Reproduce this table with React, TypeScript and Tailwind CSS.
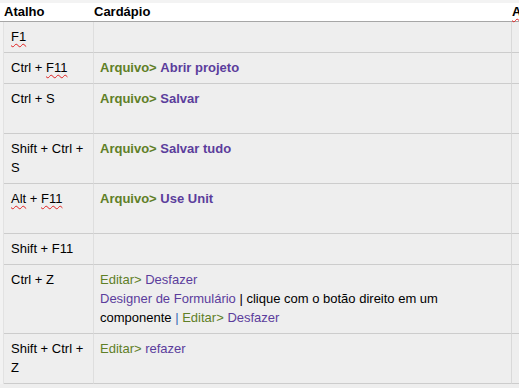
import React from "react";

const G = ({ children, bold = true }: { children: React.ReactNode; bold?: boolean }) => (
  <span className={`text-[#5f7f27] ${bold ? "font-bold" : ""}`}>{children}</span>
);
const P = ({ children, bold = true }: { children: React.ReactNode; bold?: boolean }) => (
  <span className={`text-[#5b3d9c] ${bold ? "font-bold" : ""}`}>{children}</span>
);
const Sq = ({ children }: { children: React.ReactNode }) => (
  <span className="underline decoration-wavy decoration-[#e02020] decoration-1 underline-offset-2">{children}</span>
);

type Row = { h: string; k: React.ReactNode; m: React.ReactNode };

const rows: Row[] = [
  { h: "h-[31px]", k: <Sq>F1</Sq>, m: null },
  {
    h: "h-[31px]",
    k: (
      <>
        Ctrl + <Sq>F11</Sq>
      </>
    ),
    m: (
      <>
        <G>Arquivo&gt;</G> <P>Abrir projeto</P>
      </>
    ),
  },
  {
    h: "h-[50px]",
    k: "Ctrl + S",
    m: (
      <>
        <G>Arquivo&gt;</G> <P>Salvar</P>
      </>
    ),
  },
  {
    h: "h-[50px]",
    k: "Shift + Ctrl + S",
    m: (
      <>
        <G>Arquivo&gt;</G> <P>Salvar tudo</P>
      </>
    ),
  },
  {
    h: "h-[50px]",
    k: (
      <>
        <Sq>Alt</Sq> + <Sq>F11</Sq>
      </>
    ),
    m: (
      <>
        <G>Arquivo&gt;</G> <P>Use Unit</P>
      </>
    ),
  },
  { h: "h-[31px]", k: "Shift + F11", m: null },
  {
    h: "h-[69px]",
    k: "Ctrl + Z",
    m: (
      <>
        <G bold={false}>Editar&gt;</G> <P bold={false}>Desfazer</P>
        <br />
        <P bold={false}>Designer de Formulário</P> | clique com o botão direito em um componente{" "}
        <span className="text-[#3a6db5]">|</span> <G bold={false}>Editar&gt;</G> <P bold={false}>Desfazer</P>
      </>
    ),
  },
  {
    h: "h-[50px]",
    k: "Shift + Ctrl + Z",
    m: (
      <>
        <G bold={false}>Editar&gt;</G> <P bold={false}>refazer</P>
      </>
    ),
  },
];

export default function App() {
  return (
    <div
      className="w-[519px] h-[388px] overflow-hidden bg-[#eeeeee] text-[13px] leading-[19px] text-black"
      style={{ fontFamily: '"Liberation Sans", Arial, sans-serif' }}
    >
      <div className="h-[3px] bg-[#f3f3f3]" />
      <div className="grid grid-cols-[94px_418px_1fr] h-[19px] bg-white border-b border-[#a6a6a6] font-bold leading-[17px]">
        <div className="pl-[4px]">Atalho</div>
        <div>Cardápio</div>
        <div>
          <Sq>A</Sq>
        </div>
      </div>
      {rows.map((r, i) => (
        <div key={i} className={`grid grid-cols-[4px_90px_418px_1fr] ${r.h}`}>
          <div className="bg-[#f2f2f2] border-r border-[#e2e2e2]" />
          <div className="border-b border-[#cccccc] border-r border-r-[#dedede] pt-[5px] pl-[7px] pr-[4px]">{r.k}</div>
          <div className="border-b border-[#cccccc] border-r border-r-[#d9d9d9] pt-[5px] pl-[6px] pr-[8px]">{r.m}</div>
          <div className="border-b border-[#cccccc]" />
        </div>
      ))}
    </div>
  );
}
